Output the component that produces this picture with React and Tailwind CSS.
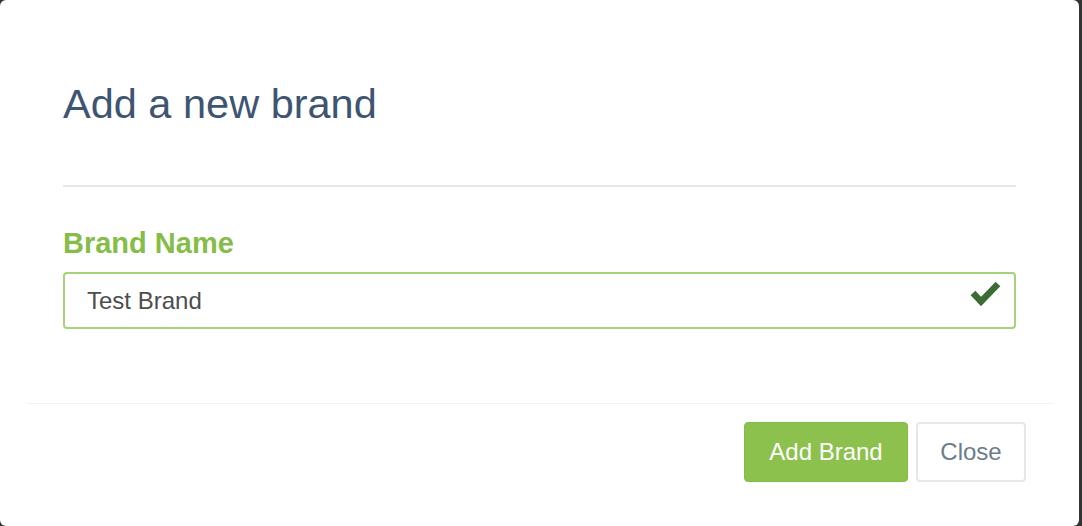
import React from "react";

export default function App() {
  return (
    <div
      className="w-[1082px] h-[526px] bg-[#333333] flex overflow-hidden"
      style={{ fontFamily: '"Liberation Sans", Arial, sans-serif' }}
    >
      <div className="w-[1079px] h-full bg-white rounded-[6px] flex flex-col">
        <div className="px-[63px] pt-[83px]">
          <h2 className="text-[41.5px] leading-[41px] text-[#3e5571] font-normal">
            Add a new brand
          </h2>
          <div className="mt-[61px] h-[2px] bg-[#e6e6e6]" />
          <div className="mt-[42px] text-[29px] leading-[29px] font-bold text-[#86bc48]">
            Brand Name
          </div>
          <div className="relative mt-[14px] h-[57px] border-2 border-[#a6d27b] rounded-[4px] flex items-center pl-[22px] pr-[50px]">
            <span className="text-[24px] text-[#4d4d4d]">Test Brand</span>
            <svg
              className="absolute right-[12px] top-[4px]"
              width="32"
              height="28"
              viewBox="0 0 32 28"
            >
              <polyline
                points="3,15 11,23.5 28,6"
                fill="none"
                stroke="#3a6c34"
                strokeWidth="6.5"
                strokeLinecap="butt"
                strokeLinejoin="miter"
              />
            </svg>
          </div>
        </div>
        <div className="mt-[74px] ml-[27px] mr-[26px] h-[1px] bg-[#f2f2f2]" />
        <div className="mt-[18px] pr-[53px] flex justify-end gap-[8px]">
          <button className="h-[60px] w-[164px] bg-[#8bc14c] border border-[#84bb45] rounded-[4px] text-white text-[24px]">
            Add Brand
          </button>
          <button className="h-[60px] w-[110px] bg-white border-2 border-[#e7e7e7] rounded-[4px] text-[#6d7c8a] text-[24px]">
            Close
          </button>
        </div>
      </div>
    </div>
  );
}
